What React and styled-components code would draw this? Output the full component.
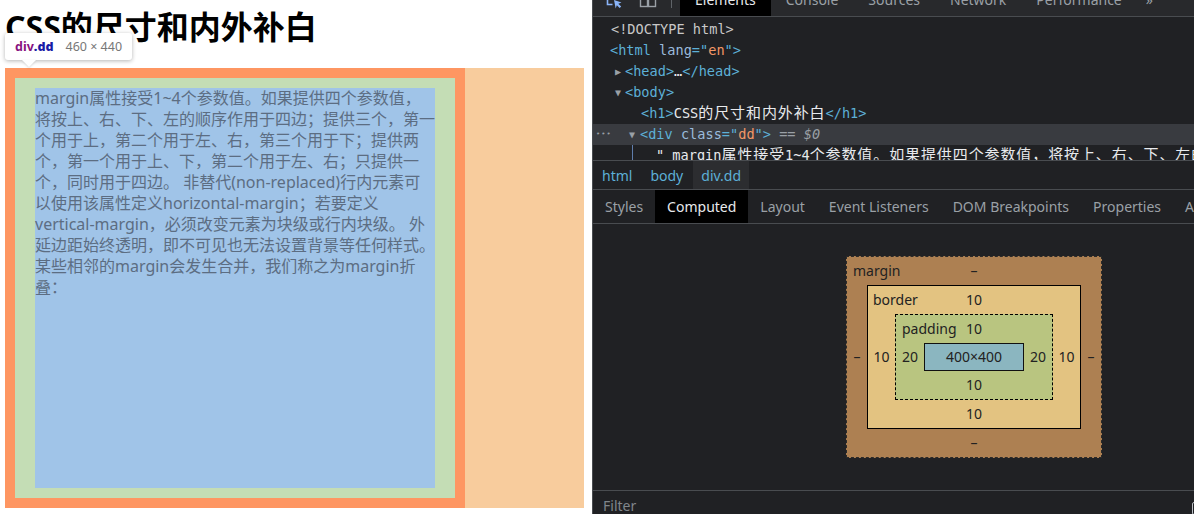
import React from "react";
import styled, { createGlobalStyle } from "styled-components";

const GlobalStyle = createGlobalStyle`
  html, body {
    margin: 0;
    padding: 0;
    background: #fff;
  }
  body {
    overflow: hidden;
  }
  * {
    box-sizing: border-box;
  }
`;

const Screen = styled.div`
  display: flex;
  width: 1194px;
  height: 514px;
  overflow: hidden;
`;

/* ---------- page being inspected ---------- */

const Page = styled.div`
  position: relative;
  width: 592px;
  flex-shrink: 0;
  background: #fff;
`;

const Title = styled.h1`
  margin: 11px 0 0 5px;
  font: 700 32px/32px "Noto Sans", "Noto Sans CJK SC", sans-serif;
  color: #000;
  white-space: nowrap;
`;

const MarginArea = styled.div`
  display: flex;
  width: 579px;
  margin: 25px 0 0 5px;
  background: #f8cc9d;
`;

const Dd = styled.div`
  width: 460px;
  height: 440px;
  padding: 10px 20px;
  border: 10px solid #fe9662;
  background: linear-gradient(#a0c4e8, #a0c4e8) content-box,
    linear-gradient(#c4ddb5, #c4ddb5) padding-box;
  font: 16px/21px "Noto Sans", "Noto Sans CJK SC", sans-serif;
  color: #5c6d82;
`;

const TextLine = styled.span`
  display: block;
  white-space: nowrap;
`;

const Tip = styled.div`
  position: absolute;
  left: 5px;
  top: 33px;
  height: 27px;
  display: flex;
  align-items: center;
  gap: 12px;
  padding: 0 10px;
  background: #fff;
  border-radius: 3px;
  box-shadow: 0 1px 4px rgba(0, 0, 0, 0.3);
  font: 12.5px "Noto Sans", sans-serif;

  &::after {
    content: "";
    position: absolute;
    left: 17px;
    bottom: -7px;
    border-left: 7px solid transparent;
    border-right: 7px solid transparent;
    border-top: 7px solid #fff;
    filter: drop-shadow(0 1px 1px rgba(0, 0, 0, 0.15));
  }
`;

const TipName = styled.span`
  font-weight: 700;
  color: #881280;

  b {
    color: #1a1aa6;
  }
`;

const TipSize = styled.span`
  color: #777;
`;

/* ---------- devtools ---------- */

const Devtools = styled.div`
  width: 602px;
  height: 514px;
  flex-shrink: 0;
  display: flex;
  flex-direction: column;
  background: #202124;
  border-left: 1px solid #494c50;
  overflow: hidden;
  font-family: "Noto Sans", sans-serif;
`;

const TopBar = styled.div`
  display: flex;
  align-items: stretch;
  height: 34px;
  margin-top: -17px;
  padding-left: 7px;
  background: #28292c;
  border-bottom: 1px solid #494c50;
  flex-shrink: 0;
`;

const IconButton = styled.div`
  width: 28px;
  flex-shrink: 0;
  display: flex;
  align-items: center;
  justify-content: center;
  margin-right: ${(p) => p.$gap || 0}px;
`;

const Separator = styled.div`
  width: 1px;
  height: 16px;
  flex-shrink: 0;
  align-self: center;
  margin: 0 8px 0 9px;
  background: #5f6368;
`;

const Tab = styled.div`
  display: flex;
  align-items: center;
  flex-shrink: 0;
  padding: 0 ${(p) => p.$pad || 15}px;
  font-size: 14px;
  white-space: nowrap;
  color: ${(p) => (p.$active ? "#e8eaed" : "#9aa0a6")};
  background: ${(p) => (p.$active ? "#000" : "transparent")};
`;

const DomTree = styled.div`
  height: 143px;
  padding-top: 2px;
  overflow: hidden;
  flex-shrink: 0;
  font: 13.6px/21px "DejaVu Sans Mono", "Noto Sans CJK SC", monospace;
  color: #c8c8c8;
`;

const DomRow = styled.div`
  display: flex;
  align-items: center;
  height: 21px;
  white-space: nowrap;
  padding-left: ${(p) => p.$indent}px;
  background: ${(p) => (p.$selected ? "#393b40" : "transparent")};

  & > * {
    flex-shrink: 0;
  }
`;

const Tag = styled.span`
  color: #5db0d7;
`;

const AttrName = styled.span`
  color: #9bbbdc;
`;

const AttrValue = styled.span`
  color: #f29766;
`;

const NodeText = styled.span`
  color: #e8eaed;
`;

const Cjk = styled.span`
  font-size: 15px;
  letter-spacing: 0.9px;
`;

const Muted = styled.span`
  color: #9aa0a6;
  font-style: ${(p) => (p.$italic ? "italic" : "normal")};
`;

const Arrow = styled.span`
  width: ${(p) => p.$w || 10}px;
  font-size: 10px;
  line-height: 21px;
  color: #9aa0a6;
`;

const Dots = styled.span`
  width: 33px;
  font-size: 7px;
  letter-spacing: 1px;
  color: #9aa0a6;
`;

const GuideLine = styled.span`
  align-self: stretch;
  width: 24px;
  border-left: 1px solid #5f7dab;
`;

const Breadcrumbs = styled.div`
  display: flex;
  height: 29px;
  padding-left: 1px;
  border-top: 1px solid #494c50;
  flex-shrink: 0;
`;

const Crumb = styled.div`
  display: flex;
  align-items: center;
  padding: 0 8px;
  margin-right: 2px;
  font-size: 14px;
  color: #5db0d7;
  background: ${(p) => (p.$active ? "#2c2d30" : "transparent")};
`;

const SubTabs = styled.div`
  display: flex;
  height: 35px;
  border-top: 1px solid #494c50;
  border-bottom: 1px solid #494c50;
  flex-shrink: 0;
`;

const Panel = styled.div`
  flex: 1;
  padding: 32px 0 0 253px;
`;

const Box = styled.div`
  display: flex;
  flex-direction: column;
  width: ${(p) => (p.$outer ? "max-content" : "auto")};
  border: 1px ${(p) => (p.$dashed ? "dashed" : "solid")} ${(p) => p.$line};
  background: ${(p) => p.$bg};
  color: #222;
  font: 14px/20px "Noto Sans", sans-serif;
`;

const BoxTop = styled.div`
  display: grid;
  grid-template-columns: 1fr auto 1fr;
  align-items: center;
  height: 28px;
`;

const BoxLabel = styled.span`
  justify-self: start;
  padding-left: ${(p) => p.$pad}px;
`;

const BoxMid = styled.div`
  display: flex;
  align-items: center;
`;

const Side = styled.span`
  width: ${(p) => p.$w}px;
  text-align: center;
`;

const BoxBottom = styled.div`
  height: 28px;
  display: flex;
  align-items: center;
  justify-content: center;
`;

const Content = styled.div`
  width: 100px;
  height: 28px;
  display: flex;
  align-items: center;
  justify-content: center;
  background: #8bb6c0;
  border: 1px solid #111;
`;

const FilterBar = styled.div`
  display: flex;
  justify-content: space-between;
  height: 24px;
  padding: 5px 0 0 10px;
  border-top: 1px solid #494c50;
  flex-shrink: 0;
  font-size: 14px;
  line-height: 20px;
  color: #80868b;
`;

const Check = styled.span`
  width: 13px;
  height: 13px;
  margin: 6px -11px 0 0;
  border: 1px solid #bdc1c6;
  border-radius: 2px;
`;

const InspectIcon = () => (
  <svg width="18" height="18" viewBox="0 0 18 18" fill="none">
    <path d="M2.5 2.5h11v5M2.5 2.5v11h5" stroke="#8ab4f8" strokeWidth="1.6" />
    <path d="M9 9l7.5 2.6-3.2 1.1 2.9 2.9-1.5 1.5-2.9-2.9-1.1 3.2z" fill="#8ab4f8" />
  </svg>
);

const DeviceIcon = () => (
  <svg width="18" height="18" viewBox="0 0 18 18" fill="none">
    <rect x="1.5" y="2.5" width="7" height="13" stroke="#9aa0a6" strokeWidth="1.4" />
    <rect x="9.5" y="2.5" width="7" height="13" stroke="#9aa0a6" strokeWidth="1.4" />
  </svg>
);

const ddLines = [
  "margin属性接受1~4个参数值。如果提供四个参数值，",
  "将按上、右、下、左的顺序作用于四边；提供三个，第一",
  "个用于上，第二个用于左、右，第三个用于下；提供两",
  "个，第一个用于上、下，第二个用于左、右；只提供一",
  "个，同时用于四边。 非替代(non-replaced)行内元素可",
  "以使用该属性定义horizontal-margin；若要定义",
  "vertical-margin，必须改变元素为块级或行内块级。 外",
  "延边距始终透明，即不可见也无法设置背景等任何样式。",
  "某些相邻的margin会发生合并，我们称之为margin折",
  "叠：",
];

const mainTabs = ["Elements", "Console", "Sources", "Network", "Performance"];
const paneTabs = [
  "Styles",
  "Computed",
  "Layout",
  "Event Listeners",
  "DOM Breakpoints",
  "Properties",
  "Accessibility",
];

export default function App() {
  return (
    <>
      <GlobalStyle />
      <Screen>
        <Page>
          <Title>CSS的尺寸和内外补白</Title>
          <MarginArea>
            <Dd>
              {ddLines.map((line) => (
                <TextLine key={line}>{line}</TextLine>
              ))}
            </Dd>
          </MarginArea>
          <Tip>
            <TipName>
              div<b>.dd</b>
            </TipName>
            <TipSize>460 × 440</TipSize>
          </Tip>
        </Page>

        <Devtools>
          <TopBar>
            <IconButton $gap={6}>
              <InspectIcon />
            </IconButton>
            <IconButton>
              <DeviceIcon />
            </IconButton>
            <Separator />
            {mainTabs.map((t, i) => (
              <Tab key={t} $active={i === 0}>
                {t}
              </Tab>
            ))}
            <Tab $pad={9}>»</Tab>
          </TopBar>

          <DomTree>
            <DomRow $indent={18}>&lt;!DOCTYPE html&gt;</DomRow>
            <DomRow $indent={17}>
              <Tag>&lt;html</Tag>&nbsp;<AttrName>lang</AttrName>
              <Tag>=&quot;</Tag>
              <AttrValue>en</AttrValue>
              <Tag>&quot;&gt;</Tag>
            </DomRow>
            <DomRow $indent={22}>
              <Arrow>▶</Arrow>
              <Tag>&lt;head&gt;</Tag>
              <NodeText>…</NodeText>
              <Tag>&lt;/head&gt;</Tag>
            </DomRow>
            <DomRow $indent={22}>
              <Arrow>▼</Arrow>
              <Tag>&lt;body&gt;</Tag>
            </DomRow>
            <DomRow $indent={48}>
              <Tag>&lt;h1&gt;</Tag>
              <NodeText>
                CSS<Cjk>的尺寸和内外补白</Cjk>
              </NodeText>
              <Tag>&lt;/h1&gt;</Tag>
            </DomRow>
            <DomRow $indent={3} $selected>
              <Dots>•••</Dots>
              <Arrow $w={11}>▼</Arrow>
              <Tag>&lt;div</Tag>&nbsp;<AttrName>class</AttrName>
              <Tag>=&quot;</Tag>
              <AttrValue>dd</AttrValue>
              <Tag>&quot;&gt;</Tag>
              &nbsp;<Muted>==</Muted>&nbsp;<Muted $italic>$0</Muted>
            </DomRow>
            <DomRow $indent={39}>
              <GuideLine />
              <NodeText>
                " margin<Cjk>属性接受</Cjk>1~4
                <Cjk>个参数值。如果提供四个参数值，将按上、右、下、左的顺序作用于四边</Cjk>
              </NodeText>
            </DomRow>
          </DomTree>

          <Breadcrumbs>
            <Crumb>html</Crumb>
            <Crumb>body</Crumb>
            <Crumb $active>div.dd</Crumb>
          </Breadcrumbs>

          <SubTabs>
            {paneTabs.map((t, i) => (
              <Tab key={t} $pad={12} $active={i === 1}>
                {t}
              </Tab>
            ))}
          </SubTabs>

          <Panel>
            <Box $outer $dashed $line="#2a2a2a" $bg="#ad8052">
              <BoxTop>
                <BoxLabel $pad={6}>margin</BoxLabel>
                <span>–</span>
              </BoxTop>
              <BoxMid>
                <Side $w={20}>–</Side>
                <Box $line="#000" $bg="#e3c381">
                  <BoxTop>
                    <BoxLabel $pad={5}>border</BoxLabel>
                    <span>10</span>
                  </BoxTop>
                  <BoxMid>
                    <Side $w={27}>10</Side>
                    <Box $dashed $line="#000" $bg="#b9c580">
                      <BoxTop>
                        <BoxLabel $pad={6}>padding</BoxLabel>
                        <span>10</span>
                      </BoxTop>
                      <BoxMid>
                        <Side $w={28}>20</Side>
                        <Content>400×400</Content>
                        <Side $w={28}>20</Side>
                      </BoxMid>
                      <BoxBottom>10</BoxBottom>
                    </Box>
                    <Side $w={27}>10</Side>
                  </BoxMid>
                  <BoxBottom>10</BoxBottom>
                </Box>
                <Side $w={20}>–</Side>
              </BoxMid>
              <BoxBottom>–</BoxBottom>
            </Box>
          </Panel>

          <FilterBar>
            <span>Filter</span>
            <Check />
          </FilterBar>
        </Devtools>
      </Screen>
    </>
  );
}
